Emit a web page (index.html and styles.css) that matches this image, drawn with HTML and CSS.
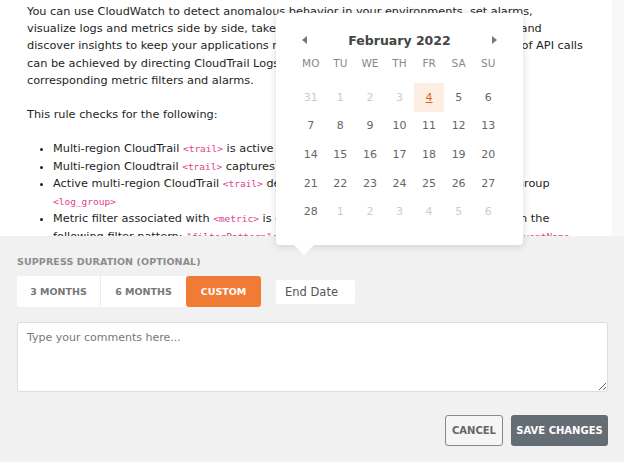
FILE: index.html
```html
<!DOCTYPE html>
<html lang="en">
<head>
    <meta charset="UTF-8">
    <title>Suppress Rule</title>
    <link rel="stylesheet" href="styles.css">
</head>
<body>

<div class="page">
  <div class="content">
    <div class="article">
      <p class="lines">You can use CloudWatch to detect anomalous behavior in your environments, set alarms,<br>
      visualize logs and metrics side by side, take automated actions, troubleshoot outages, and<br>
      discover insights to keep your applications running smoothly. The real-time monitoring of API calls<br>
      can be achieved by directing CloudTrail Logs to CloudWatch Logs and establishing<br>
      corresponding metric filters and alarms.</p>

      <p>This rule checks for the following:</p>

      <ul class="checks">
        <li>Multi-region CloudTrail <code>&lt;trail&gt;</code> is active</li>
        <li>Multi-region Cloudtrail <code>&lt;trail&gt;</code> captures all management events</li>
        <li>Active multi-region CloudTrail <code>&lt;trail&gt;</code> delivers its logs to the CloudWatch Logs log group<br><code>&lt;log_group&gt;</code></li>
        <li>Metric filter associated with <code>&lt;metric&gt;</code> is configured in the CloudWatch log group with the<br>following filter pattern: <code>"filterPattern": "{ ($.eventName = CreateLogStream) || ($.eventName =</code></li>
      </ul>
    </div>
    <div class="track"></div>
  </div>

  <div class="calendar">
    <div class="cal-head">
      <span class="arrow left"></span>
      <span class="month">February 2022</span>
      <span class="arrow right"></span>
    </div>
    <div class="days">
      <span class="dow">MO</span><span class="dow">TU</span><span class="dow">WE</span><span class="dow">TH</span><span class="dow">FR</span><span class="dow">SA</span><span class="dow">SU</span>
    </div>
    <div class="dates">
      <span class="off">31</span><span class="off">1</span><span class="off">2</span><span class="off">3</span><span class="today">4</span><span>5</span><span>6</span>
      <span>7</span><span>8</span><span>9</span><span>10</span><span>11</span><span>12</span><span>13</span>
      <span>14</span><span>15</span><span>16</span><span>17</span><span>18</span><span>19</span><span>20</span>
      <span>21</span><span>22</span><span>23</span><span>24</span><span>25</span><span>26</span><span>27</span>
      <span>28</span><span class="off">1</span><span class="off">2</span><span class="off">3</span><span class="off">4</span><span class="off">5</span><span class="off">6</span>
    </div>
  </div>

  <div class="panel">
    <div class="label">SUPPRESS DURATION (OPTIONAL)</div>
    <div class="duration">
      <div class="segments">
        <button class="seg">3 MONTHS</button>
        <button class="seg">6 MONTHS</button>
        <button class="seg active">CUSTOM</button>
      </div>
      <input type="text" class="end-date" placeholder="End Date">
    </div>
    <textarea class="comments" placeholder="Type your comments here..."></textarea>
    <div class="actions">
      <button class="btn cancel">CANCEL</button>
      <button class="btn save">SAVE CHANGES</button>
    </div>
  </div>
</div>

</body>
</html>
```

FILE: styles.css
```css
body {
	margin: 0;
	background: #f1f1f1;
	font-family: "DejaVu Sans", sans-serif;
	color: #1e1e1e;
}
.page {
	position: relative;
	width: 624px;
	height: 462px;
	overflow: hidden;
}
.content {
	display: flex;
	height: 236px;
}
.article {
	width: 612px;
	background: #fff;
	padding: 3px 0 0 27px;
	box-sizing: border-box;
	overflow: hidden;
	font-size: 11.3px;
	line-height: 17.2px;
}
.article p {
	margin: 0 0 17px 0;
	white-space: nowrap;
}
.track {
	flex: 1;
	background: #f8f8f8;
}
.checks {
	margin: 0;
	padding-left: 26px;
	white-space: nowrap;
	line-height: 17.5px;
}
code {
	font-family: "DejaVu Sans Mono", monospace;
	font-size: 9.5px;
	color: #e0408a;
}

/* date picker popup */
.calendar {
	position: absolute;
	left: 276px;
	top: 13px;
	width: 247px;
	height: 232px;
	background: #fff;
	border-radius: 4px;
	box-shadow: 0 1px 8px rgba(0, 0, 0, 0.15);
	padding: 0 20px;
	box-sizing: border-box;
}
.calendar::after {
	content: "";
	position: absolute;
	left: 18px;
	bottom: -10px;
	border-width: 10px 10px 0 10px;
	border-style: solid;
	border-color: #fff transparent transparent transparent;
}
.cal-head {
	display: flex;
	align-items: center;
	justify-content: space-between;
	height: 28px;
	margin-top: 13px;
	padding: 0 6px;
}
.month {
	font-weight: bold;
	font-size: 12.5px;
	color: #444;
}
.arrow {
	width: 0;
	height: 0;
	border-style: solid;
}
.arrow.left {
	border-width: 4px 5px 4px 0;
	border-color: transparent #777 transparent transparent;
}
.arrow.right {
	border-width: 4px 0 4px 5px;
	border-color: transparent transparent transparent #777;
}
.days, .dates {
	display: grid;
	grid-template-columns: repeat(7, 1fr);
	text-align: center;
}
.days {
	margin-top: 2px;
	height: 14px;
	line-height: 14px;
	font-size: 10.5px;
	color: #888;
}
.dates {
	margin-top: 13px;
	grid-auto-rows: 28.6px;
	font-size: 11px;
	color: #666;
}
.dates span {
	display: flex;
	align-items: center;
	justify-content: center;
}
.dates .off {
	color: #ccc;
}
.dates .today {
	background: #fdeee4;
	color: #e0651c;
	text-decoration: underline;
}

/* bottom form */
.panel {
	padding: 20px 16px 0 17px;
}
.label {
	font-size: 9.5px;
	font-weight: bold;
	color: #8c8c8c;
	line-height: 12px;
	letter-spacing: 0.1px;
}
.duration {
	display: flex;
	align-items: center;
	gap: 15px;
	margin-top: 8px;
}
.segments {
	display: flex;
	height: 31px;
	background: #fff;
	border-radius: 3px;
}
.seg {
	border: none;
	border-right: 1px solid #ebebeb;
	background: #fff;
	font-family: inherit;
	font-size: 9.5px;
	font-weight: bold;
	color: #777;
	padding: 0;
	border-radius: 3px 0 0 3px;
}
.seg:nth-child(1) { width: 84px; }
.seg:nth-child(2) { width: 85px; border-radius: 0; border-right: none; }
.seg.active {
	width: 75px;
	background: #f07b35;
	color: #fff;
	border: none;
	border-radius: 3px;
}
.end-date {
	width: 79px;
	height: 24px;
	border: none;
	border-radius: 3px;
	padding: 0 9px;
	box-sizing: border-box;
	font-family: inherit;
	font-size: 11.5px;
}
.end-date::placeholder {
	color: #555;
}
.comments {
	display: block;
	width: 591px;
	height: 70px;
	margin-top: 15px;
	border: 1px solid #ddd;
	border-radius: 3px;
	padding: 8px 9px;
	box-sizing: border-box;
	font-family: inherit;
	font-size: 11px;
	resize: vertical;
}
.comments::placeholder {
	color: #777;
}
.actions {
	display: flex;
	justify-content: flex-end;
	gap: 8px;
	margin-top: 23px;
	width: 591px;
}
.btn {
	height: 31px;
	font-family: inherit;
	font-size: 10px;
	font-weight: bold;
	border-radius: 3px;
	padding: 0;
}
.cancel {
	width: 58px;
	background: #f5f5f5;
	border: 1px solid #888;
	color: #666;
}
.save {
	width: 97px;
	background: #646c74;
	border: none;
	color: #fff;
}
```
